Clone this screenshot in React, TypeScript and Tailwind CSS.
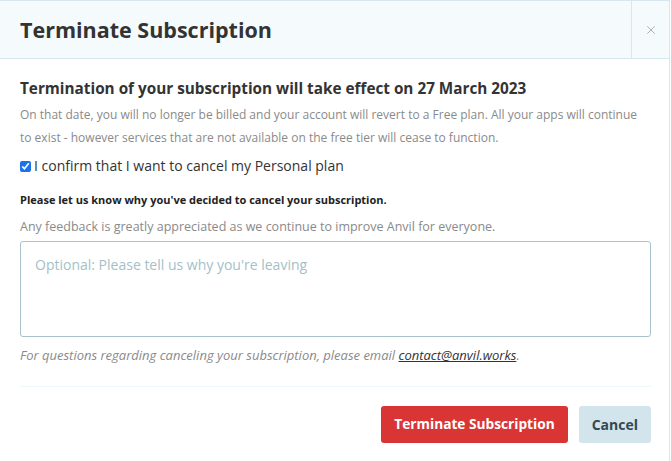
import { X } from 'lucide-react'

export default function App() {
    return (
        <div className="min-h-[461px] w-[671px] bg-white font-['Open_Sans',sans-serif]">
            <div className="flex h-[461px] w-[670px] flex-col border-r border-[#d6e7ee]">
                {/* Header */}
                <div className="flex h-[59px] items-stretch border-y border-[#d6e7ee] bg-[#f5fbfd]">
                    <h1 className="flex flex-1 items-center pl-5 pt-[2px] text-[21.5px] font-bold text-[#333]">
                        Terminate Subscription
                    </h1>
                    <button className="flex w-[38px] items-center justify-center border-l border-[#d6e7ee]" aria-label="Close">
                        <X className="h-[14px] w-[14px] text-[#8a9aa0]" strokeWidth={1.25} />
                    </button>
                </div>

                {/* Body */}
                <div className="flex flex-col pl-5 pr-[18px] pt-[18px]">
                    <h2 className="text-[15.3px] font-bold leading-[22px] text-[#333]">
                        Termination of your subscription will take effect on 27 March 2023
                    </h2>
                    <p className="mt-[4px] text-[12px] leading-[23px] text-[#8a8a8a]">
                        On that date, you will no longer be billed and your account will revert to a Free plan. All your apps will continue to exist - however services that are not available on the free tier will cease to function.
                    </p>
                    <label className="mt-[6px] flex items-center gap-[3px] text-[14px] leading-[22px] text-[#333]">
                        <input type="checkbox" defaultChecked className="h-[11px] w-[11px] accent-[#1a73e8]" />
                        I confirm that I want to cancel my Personal plan
                    </label>
                    <p className="mt-[13px] text-[11px] font-bold leading-[20px] text-[#222]">
                        Please let us know why you've decided to cancel your subscription.
                    </p>
                    <p className="mt-[7px] text-[12.5px] leading-[20px] text-[#8a8a8a]">
                        Any feedback is greatly appreciated as we continue to improve Anvil for everyone.
                    </p>
                    <textarea
                        placeholder="Optional: Please tell us why you're leaving"
                        className="mt-[4px] h-[96px] w-full resize-none rounded-[3px] border border-[#a8c3cb] px-[14px] py-[12px] text-[14px] leading-[22px] text-[#333] outline-none placeholder:text-[#a3bfc8]"
                    />
                    <p className="mt-[8px] text-[13px] italic leading-[20px] text-[#8a8a8a]">
                        For questions regarding canceling your subscription, please email{' '}
                        <a href="#" className="text-[#333] underline">contact@anvil.works</a>.
                    </p>
                    <div className="mt-[21px] border-t border-[#eef8fa]" />
                    <div className="mt-[19px] flex justify-end gap-[11px]">
                        <button className="h-[37px] rounded-[3px] bg-[#d93535] px-[13px] text-[13.7px] font-bold text-white">
                            Terminate Subscription
                        </button>
                        <button className="h-[37px] rounded-[3px] bg-[#d2e5ec] px-[13px] text-[14px] font-bold text-[#37474f]">
                            Cancel
                        </button>
                    </div>
                </div>
            </div>
        </div>
    )
}
